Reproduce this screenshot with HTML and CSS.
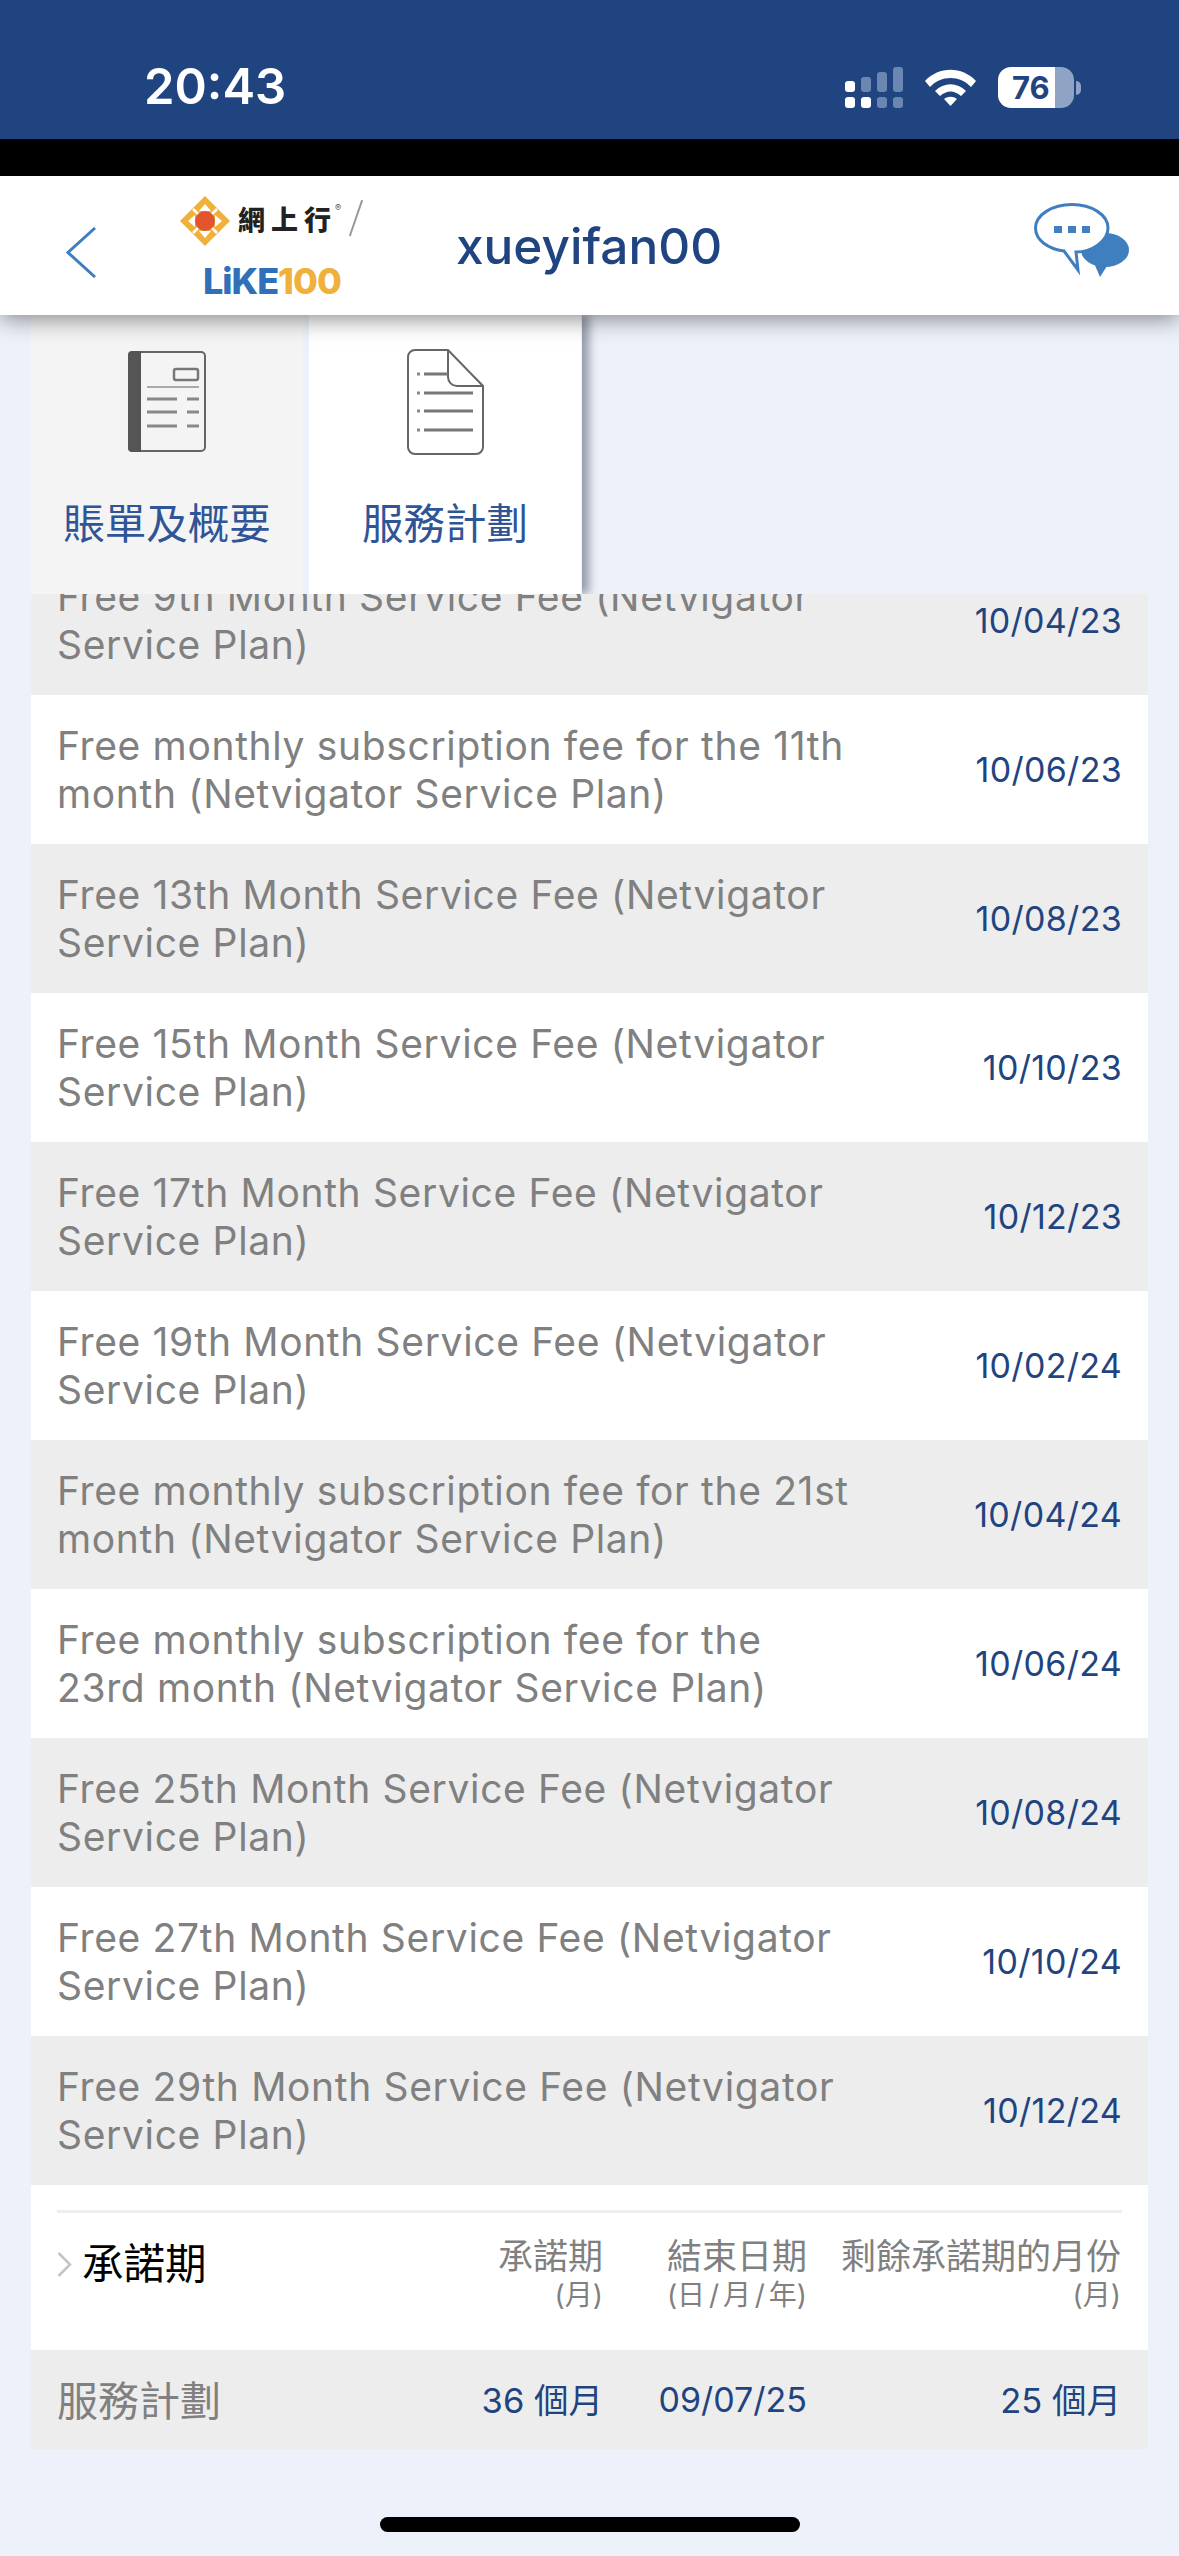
FILE: index.html
```html
<!DOCTYPE html>
<html lang="zh-HK">
<head>
  <meta charset="UTF-8" />
  <meta name="viewport" content="width=device-width, initial-scale=1" />
  <title>服務計劃</title>
  <link rel="stylesheet" href="styles.css">
</head>
<body>
  <div class="phone">
    <!-- status bar -->
    <div class="status">
      <span class="time">20:43</span>
      <div class="status-icons">
        <svg class="signal" width="58" height="41" viewBox="0 0 58 41">
          <rect x="0" y="14" width="10" height="11" rx="3" fill="#fff"/>
          <rect x="16" y="10" width="10" height="15" rx="3" fill="#6b86b0"/>
          <rect x="32" y="5" width="10" height="20" rx="3" fill="#6b86b0"/>
          <rect x="48" y="0" width="10" height="25" rx="3" fill="#6b86b0"/>
          <rect x="0" y="30" width="10" height="11" rx="3" fill="#fff"/>
          <rect x="16" y="30" width="10" height="11" rx="3" fill="#fff"/>
          <rect x="32" y="30" width="10" height="11" rx="3" fill="#6b86b0"/>
          <rect x="48" y="30" width="10" height="11" rx="3" fill="#6b86b0"/>
        </svg>
        <svg class="wifi" width="51" height="37" viewBox="0 0 51 37">
          <path d="M0 12 C14 -3 37 -3 51 12 L46 18 C35 6 16 6 5 18 Z" fill="#fff"/>
          <path d="M10 22 C19 13 32 13 41 22 L36 27 C29 21 22 21 15 27 Z" fill="#fff"/>
          <path d="M19 30 C23 27 28 27 32 30 L25.500 37 Z" fill="#fff"/>
        </svg>
        <div class="battery">
          <div class="battery-body"><span>76</span></div>
          <div class="battery-nub"></div>
        </div>
      </div>
    </div>
    <div class="black-strip"></div>

    <!-- header -->
    <header class="topbar">
      <svg class="back" width="30" height="51" viewBox="0 0 30 51">
        <path d="M29 1 L2 25.500 L29 50" fill="none" stroke="#3f7fbf" stroke-width="3"/>
      </svg>
      <div class="logo">
        <div class="logo-top">
          <svg width="50" height="50" viewBox="0 0 50 50">
            <path d="M25 0 L50 25 L25 50 L0 25 Z" fill="#efb03c"/>
            <path d="M25 8 L31 15 L19 15 Z M25 42 L31 35 L19 35 Z M8 25 L15 19 L15 31 Z M42 25 L35 19 L35 31 Z" fill="#fff"/>
            <path d="M13 13 L37 37 M37 13 L13 37" stroke="#fff" stroke-width="2.500"/>
            <circle cx="25" cy="25" r="10" fill="#e2552d"/>
          </svg>
          <span class="logo-cn">網上行</span>
          <span class="logo-reg">®</span>
          <span class="logo-slash"></span>
        </div>
        <div class="logo-like"><span class="like-blue">LiKE</span><span class="like-orange">100</span></div>
      </div>
      <h1 class="account">xueyifan00</h1>
      <svg class="chat" width="95" height="75" viewBox="0 0 95 75">
        <ellipse cx="71" cy="47" rx="24" ry="17" fill="#3f7fbf"/>
        <path d="M60 60 L66 74 L75 60 Z" fill="#3f7fbf"/>
        <path d="M38 1.500 C58 1.500 74 12 74 25 C74 38 58 49 42 49 L44 67 L30 48 C14 46 1.500 37 1.500 25 C1.500 12 18 1.500 38 1.500 Z" fill="#fff" stroke="#3f7fbf" stroke-width="3"/>
        <rect x="20" y="23" width="8" height="7" fill="#3f7fbf"/>
        <rect x="34" y="23" width="8" height="7" fill="#3f7fbf"/>
        <rect x="48" y="23" width="8" height="7" fill="#3f7fbf"/>
      </svg>
    </header>

    <!-- tabs -->
    <nav class="tabs">
      <div class="tab tab-off">
        <svg width="78" height="101" viewBox="0 0 78 101">
          <rect x="1" y="1" width="76" height="99" rx="4" fill="none" stroke="#666" stroke-width="2"/>
          <path d="M4 0 H13 V101 H4 A4 4 0 0 1 0 97 V4 A4 4 0 0 1 4 0 Z" fill="#555"/>
          <rect x="46" y="18" width="24" height="11" rx="2" fill="none" stroke="#777" stroke-width="2.500"/>
          <path d="M19 36 H71" stroke="#aaa" stroke-width="2"/>
          <path d="M19 48 H49 M59 48 H71 M19 61 H49 M59 61 H71 M19 75 H49 M59 75 H71" stroke="#888" stroke-width="3"/>
        </svg>
        <span class="tab-label">賬單及概要</span>
      </div>
      <div class="tab tab-on">
        <svg width="77" height="106" viewBox="0 0 77 106">
          <path d="M41 1 H8 A7 7 0 0 0 1 8 V98 A7 7 0 0 0 8 105 H69 A7 7 0 0 0 76 98 V37 Z" fill="none" stroke="#666" stroke-width="2"/>
          <path d="M41 1 V28 A9 9 0 0 0 50 37 H76" fill="none" stroke="#666" stroke-width="2"/>
          <path d="M17 25 H41 M17 44 H66 M17 62 H66 M17 81 H66" stroke="#777" stroke-width="3"/>
          <path d="M10 25 H13 M10 44 H13 M10 62 H13 M10 81 H13" stroke="#888" stroke-width="3"/>
        </svg>
        <span class="tab-label">服務計劃</span>
      </div>
    </nav>

    <!-- fee list, scrolled under the tabs -->
    <div class="list-clip">
      <div class="list">
        <div class="row grey"><div class="row-text">Free 9th Month Service Fee (Netvigator<br>Service Plan)</div><div class="row-date">10/04/23</div></div>
        <div class="row"><div class="row-text">Free monthly subscription fee for the 11th<br>month (Netvigator Service Plan)</div><div class="row-date">10/06/23</div></div>
        <div class="row grey"><div class="row-text">Free 13th Month Service Fee (Netvigator<br>Service Plan)</div><div class="row-date">10/08/23</div></div>
        <div class="row"><div class="row-text">Free 15th Month Service Fee (Netvigator<br>Service Plan)</div><div class="row-date">10/10/23</div></div>
        <div class="row grey"><div class="row-text">Free 17th Month Service Fee (Netvigator<br>Service Plan)</div><div class="row-date">10/12/23</div></div>
        <div class="row"><div class="row-text">Free 19th Month Service Fee (Netvigator<br>Service Plan)</div><div class="row-date">10/02/24</div></div>
        <div class="row grey"><div class="row-text">Free monthly subscription fee for the 21st<br>month (Netvigator Service Plan)</div><div class="row-date">10/04/24</div></div>
        <div class="row"><div class="row-text">Free monthly subscription fee for the<br>23rd month (Netvigator Service Plan)</div><div class="row-date">10/06/24</div></div>
        <div class="row grey"><div class="row-text">Free 25th Month Service Fee (Netvigator<br>Service Plan)</div><div class="row-date">10/08/24</div></div>
        <div class="row"><div class="row-text">Free 27th Month Service Fee (Netvigator<br>Service Plan)</div><div class="row-date">10/10/24</div></div>
        <div class="row grey"><div class="row-text">Free 29th Month Service Fee (Netvigator<br>Service Plan)</div><div class="row-date">10/12/24</div></div>
      </div>
    </div>

    <!-- commitment period -->
    <section class="commit">
      <div class="commit-head">
        <div class="commit-rule"></div>
        <div class="commit-cols">
          <div class="commit-title">
            <svg width="15" height="25" viewBox="0 0 15 25"><path d="M1.500 1 L13 12.500 L1.500 24" fill="none" stroke="#c4c4c4" stroke-width="2.500"/></svg>
            <span>承諾期</span>
          </div>
          <div class="col col-a"><span class="col-label">承諾期</span><span class="col-sub">(月)</span></div>
          <div class="col col-b"><span class="col-label">結束日期</span><span class="col-sub">(日 / 月 / 年)</span></div>
          <div class="col col-c"><span class="col-label">剩餘承諾期的月份</span><span class="col-sub">(月)</span></div>
        </div>
      </div>
      <div class="commit-row">
        <div class="commit-name">服務計劃</div>
        <div class="val val-cjk col-a">36 個月</div>
        <div class="val val-date col-b">09/07/25</div>
        <div class="val val-cjk col-c">25 個月</div>
      </div>
    </section>

    <div class="home-wrap"><div class="home-bar"></div></div>
  </div>
</body>
</html>
```

FILE: styles.css
```css
* {
  box-sizing: border-box;
}
html, body {
  margin: 0;
  padding: 0;
}
body {
  font-family: Inter, "Noto Sans CJK TC", sans-serif;
  background: #edf2fa;
  color: #808080;
}
.phone {
  width: 1179px;
  height: 2556px;
  overflow: hidden;
  display: flex;
  flex-direction: column;
}

/* status bar */
.status {
  height: 139px;
  background: #1f4480;
  display: flex;
  align-items: flex-start;
  justify-content: space-between;
  padding: 58px 98px 0 144px;
  flex-shrink: 0;
}
.time {
  color: #fff;
  font-size: 49px;
  font-weight: 600;
  line-height: 58px;
}
.status-icons {
  display: flex;
  align-items: flex-start;
  margin-top: 9px;
}
.signal {
  margin-right: 22px;
}
.wifi {
  margin-top: 2px;
  margin-right: 22px;
}
.battery {
  display: flex;
  align-items: center;
}
.battery-body {
  width: 76px;
  height: 41px;
  border-radius: 13px;
  background: linear-gradient(90deg, #fff 75%, #8fa3c4 75%);
  color: #1f4480;
  font-size: 31px;
  font-weight: 700;
  line-height: 41px;
  padding-left: 14px;
}
.battery-nub {
  width: 5px;
  height: 14px;
  margin-left: 2px;
  border-radius: 0 5px 5px 0;
  background: #8fa3c4;
}
.black-strip {
  height: 37px;
  background: #000;
  flex-shrink: 0;
}

/* header */
.topbar {
  position: relative;
  z-index: 3;
  height: 139px;
  background: #fff;
  box-shadow: 0 4px 22px rgba(0,0,0,0.45);
  display: flex;
  align-items: center;
  flex-shrink: 0;
  padding-left: 66px;
}
.back {
  margin-top: 14px;
}
.logo {
  width: 276px;
  margin-left: 84px;
  display: flex;
  flex-direction: column;
  align-items: flex-start;
}
.logo-top {
  display: flex;
  align-items: center;
  height: 50px;
}
.logo-cn {
  margin-left: 8px;
  font-size: 27px;
  font-weight: 900;
  letter-spacing: 6px;
  color: #222;
  line-height: 50px;
}
.logo-reg {
  font-size: 9px;
  color: #555;
  align-self: flex-start;
  margin-top: 6px;
  margin-left: -2px;
  line-height: 12px;
}
.logo-slash {
  width: 1.500px;
  height: 38px;
  margin-left: 14px;
  margin-top: -6px;
  background: #999;
  transform: rotate(19deg);
}
.logo-like {
  margin-left: 23px;
  margin-top: 20px;
  font-size: 36px;
  font-weight: 800;
  line-height: 30px;
  letter-spacing: -1px;
}
.like-blue {
  color: #2f70b8;
}
.like-orange {
  color: #efb03c;
}
.account {
  margin: 0;
  width: 578px;
  font-size: 49.500px;
  font-weight: 500;
  color: #1f4480;
  line-height: 60px;
}
.chat {
  margin-top: -10px;
}

/* tabs */
.tabs {
  position: relative;
  z-index: 2;
  width: 551px;
  height: 279px;
  margin-left: 31px;
  display: flex;
  gap: 6px;
  flex-shrink: 0;
  box-shadow: 7px 0 9px rgba(60,70,90,0.5);
  clip-path: inset(0 -20px 0 0);
}
.tab {
  width: 272px;
  display: flex;
  flex-direction: column;
  align-items: center;
  padding-top: 36px;
}
.tab-off {
  background: #f4f4f4;
}
.tab-on {
  background: #fff;
}
.tab-on svg {
  margin-top: -2px;
}
.tab-label {
  margin-top: 46px;
  font-size: 41.500px;
  line-height: 52px;
  color: #2f5597;
}
.tab-on .tab-label {
  margin-top: 43px;
}

/* fee list */
.list-clip {
  margin: 0 31px;
  height: 1591px;
  overflow: hidden;
  flex-shrink: 0;
}
.list {
  margin-top: -48px;
}
.row {
  height: 149px;
  background: #fff;
  display: flex;
  align-items: center;
  justify-content: space-between;
  padding: 0 26px;
}
.row.grey {
  background: #ededed;
}
.row-text {
  font-size: 39px;
  letter-spacing: 0.650px;
  line-height: 48px;
  color: #808080;
}
.row-date {
  font-size: 34px;
  letter-spacing: 0.300px;
  color: #1f4480;
  white-space: nowrap;
}

/* commitment period */
.commit {
  margin: 0 31px;
  flex-shrink: 0;
}
.commit-head {
  height: 165px;
  background: #fff;
  padding: 25px 26px 0;
}
.commit-rule {
  height: 3px;
  background: #eee;
}
.commit-cols {
  display: flex;
  align-items: flex-start;
}
.commit-title {
  width: 400px;
  display: flex;
  align-items: center;
  gap: 10px;
  font-size: 41.500px;
  color: #000;
  margin-top: 26px;
  line-height: 50px;
}
.col {
  display: flex;
  flex-direction: column;
  align-items: flex-end;
  margin-top: 22px;
}
.col-label {
  font-size: 35px;
  line-height: 42px;
  color: #808080;
  white-space: nowrap;
}
.col-sub {
  font-size: 28px;
  word-spacing: -4px;
  line-height: 36px;
  color: #808080;
  white-space: nowrap;
}
.col-a {
  width: 146px;
  text-align: right;
}
.col-b {
  width: 204px;
  text-align: right;
}
.col-c {
  width: 314px;
  text-align: right;
}
.commit-row {
  height: 99px;
  background: #ededed;
  display: flex;
  align-items: center;
  padding: 0 26px;
}
.commit-name {
  width: 400px;
  font-size: 41px;
  color: #808080;
  padding-bottom: 4px;
}
.val {
  color: #1f4480;
  white-space: nowrap;
}
.val-cjk {
  font-size: 34.500px;
  padding-bottom: 4px;
}
.val-date {
  font-size: 34px;
}

/* home indicator */
.home-wrap {
  display: flex;
  justify-content: center;
  padding-top: 68px;
}
.home-bar {
  width: 420px;
  height: 15px;
  border-radius: 8px;
  background: #000;
}
```
